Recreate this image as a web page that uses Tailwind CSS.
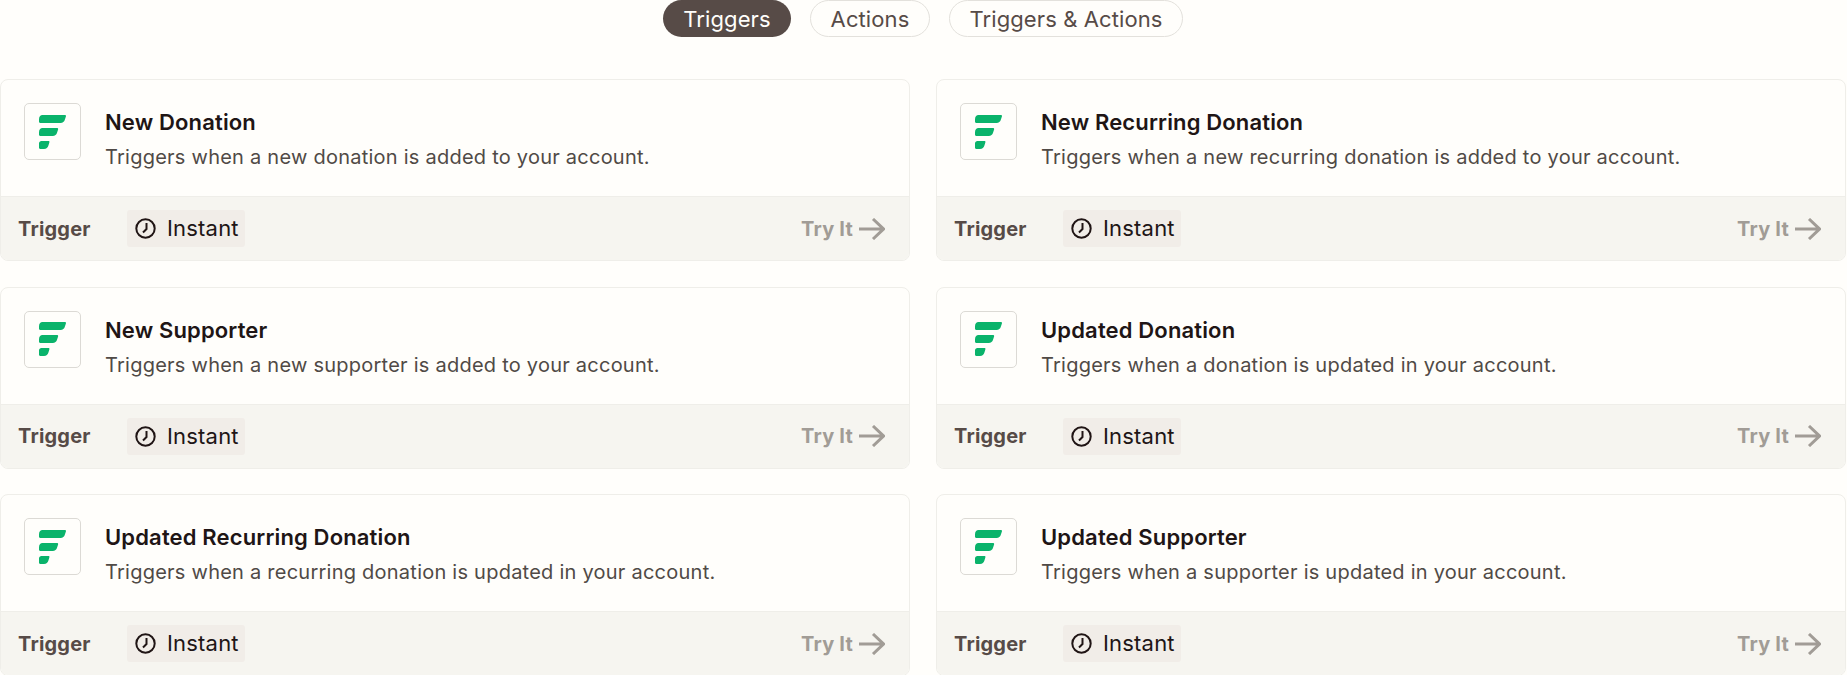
<!DOCTYPE html>
<html lang="en">
<head>
    <meta charset="UTF-8">
    <title>Triggers</title>
    <script src="https://cdn.jsdelivr.net/npm/@tailwindcss/browser@4"></script>
</head>
<body class="bg-[#fffefb] font-['Inter',sans-serif] overflow-hidden">
    <svg class="hidden">
        <symbol id="logo" viewBox="0 0 27 34">
            <path d="M3.500 0H25.800c.9 0 1.400.6 1.100 1.400L26 4.300C25.300 6.800 23.800 8 21.500 8H1.500C.5 8 0 7.400 0 6.500V4.500C0 1.700 1.300 0 3.500 0z" fill="#0ab36b"/>
            <path d="M3.500 13H18c.9 0 1.400.6 1.100 1.400L18.200 17.300C17.500 19.800 16 21 13.700 21H1.500C.5 21 0 20.400 0 19.500V17.500C0 14.700 1.300 13 3.500 13z" fill="#0ab36b"/>
            <path d="M2.500 26H9.500c.7 0 1.100.5.900 1.200L9.600 30C8.900 32.700 7.300 34 5 34H1.500C.5 34 0 33.400 0 32.500V28.500C0 27 1 26 2.500 26z" fill="#0ab36b"/>
        </symbol>
        <symbol id="clock" viewBox="0 0 21 21">
            <circle cx="10.500" cy="10.500" r="9.200" fill="none" stroke="currentColor" stroke-width="2"/>
            <path d="M11.500 5V11L8 14.500" fill="none" stroke="currentColor" stroke-width="2"/>
        </symbol>
        <symbol id="arrow" viewBox="0 0 26 22">
            <path d="M0 11H24.500M14 1 24.500 11 14 21" fill="none" stroke="currentColor" stroke-width="3"/>
        </symbol>
    </svg>

    <nav class="w-[1846px] flex justify-center gap-[19px] h-[79px] items-start text-[22px] leading-[36px] tracking-[0.1px] text-[#574b47]">
        <a class="h-[37px] w-[128px] flex items-center justify-center rounded-full bg-[#574b47] text-[#fffefb]">Triggers</a>
        <a class="h-[37px] w-[120px] flex items-center justify-center rounded-full border border-[#e3e1dc]">Actions</a>
        <a class="h-[37px] w-[234px] flex items-center justify-center rounded-full border border-[#e3e1dc]">Triggers &amp; Actions</a>
    </nav>

    <main class="grid grid-cols-[910px_910px] gap-x-[26px] gap-y-[25.5px]">
        <section class="h-[182px] flex flex-col rounded-[8px] border border-[#efeee9] overflow-hidden">
            <div class="h-[117px] flex items-start pt-[23px] pl-[23px] border-b border-[#efeee9]">
                <div class="size-[57px] shrink-0 flex items-center justify-center rounded-[5px] border border-[#dcdad5]"><svg class="w-[27px] h-[34px]"><use href="#logo"/></svg></div>
                <div class="ml-[24px]">
                    <h3 class="text-[22px] leading-[30px] mt-[4px] tracking-[0.15px] font-semibold text-[#201515]">New Donation</h3>
                    <p class="text-[20px] leading-[28px] mt-[6px] tracking-[0.24px] text-[#504a46]">Triggers when a new donation is added to your account.</p>
                </div>
            </div>
            <div class="flex-1 flex items-center bg-[#f6f5f0] pl-[17px] pr-[24px]">
                <span class="w-[109px] text-[20px] font-bold tracking-[0.2px] text-[#574b47]">Trigger</span>
                <span class="h-[37px] w-[118px] flex items-center pl-[8px] rounded-[3px] bg-[#f1ede8] text-[22px] tracking-[0.2px] text-[#201515]"><svg class="size-[21px] mr-[11px]"><use href="#clock"/></svg>Instant</span>
                <span class="ml-auto flex items-center text-[20px] font-bold tracking-[0.2px] text-[#a19c96]">Try It<svg class="w-[26px] h-[22px] ml-[6px]"><use href="#arrow"/></svg></span>
            </div>
        </section>
        <section class="h-[182px] flex flex-col rounded-[8px] border border-[#efeee9] overflow-hidden">
            <div class="h-[117px] flex items-start pt-[23px] pl-[23px] border-b border-[#efeee9]">
                <div class="size-[57px] shrink-0 flex items-center justify-center rounded-[5px] border border-[#dcdad5]"><svg class="w-[27px] h-[34px]"><use href="#logo"/></svg></div>
                <div class="ml-[24px]">
                    <h3 class="text-[22px] leading-[30px] mt-[4px] tracking-[0.15px] font-semibold text-[#201515]">New Recurring Donation</h3>
                    <p class="text-[20px] leading-[28px] mt-[6px] tracking-[0.24px] text-[#504a46]">Triggers when a new recurring donation is added to your account.</p>
                </div>
            </div>
            <div class="flex-1 flex items-center bg-[#f6f5f0] pl-[17px] pr-[24px]">
                <span class="w-[109px] text-[20px] font-bold tracking-[0.2px] text-[#574b47]">Trigger</span>
                <span class="h-[37px] w-[118px] flex items-center pl-[8px] rounded-[3px] bg-[#f1ede8] text-[22px] tracking-[0.2px] text-[#201515]"><svg class="size-[21px] mr-[11px]"><use href="#clock"/></svg>Instant</span>
                <span class="ml-auto flex items-center text-[20px] font-bold tracking-[0.2px] text-[#a19c96]">Try It<svg class="w-[26px] h-[22px] ml-[6px]"><use href="#arrow"/></svg></span>
            </div>
        </section>
        <section class="h-[182px] flex flex-col rounded-[8px] border border-[#efeee9] overflow-hidden">
            <div class="h-[117px] flex items-start pt-[23px] pl-[23px] border-b border-[#efeee9]">
                <div class="size-[57px] shrink-0 flex items-center justify-center rounded-[5px] border border-[#dcdad5]"><svg class="w-[27px] h-[34px]"><use href="#logo"/></svg></div>
                <div class="ml-[24px]">
                    <h3 class="text-[22px] leading-[30px] mt-[4px] tracking-[0.15px] font-semibold text-[#201515]">New Supporter</h3>
                    <p class="text-[20px] leading-[28px] mt-[6px] tracking-[0.24px] text-[#504a46]">Triggers when a new supporter is added to your account.</p>
                </div>
            </div>
            <div class="flex-1 flex items-center bg-[#f6f5f0] pl-[17px] pr-[24px]">
                <span class="w-[109px] text-[20px] font-bold tracking-[0.2px] text-[#574b47]">Trigger</span>
                <span class="h-[37px] w-[118px] flex items-center pl-[8px] rounded-[3px] bg-[#f1ede8] text-[22px] tracking-[0.2px] text-[#201515]"><svg class="size-[21px] mr-[11px]"><use href="#clock"/></svg>Instant</span>
                <span class="ml-auto flex items-center text-[20px] font-bold tracking-[0.2px] text-[#a19c96]">Try It<svg class="w-[26px] h-[22px] ml-[6px]"><use href="#arrow"/></svg></span>
            </div>
        </section>
        <section class="h-[182px] flex flex-col rounded-[8px] border border-[#efeee9] overflow-hidden">
            <div class="h-[117px] flex items-start pt-[23px] pl-[23px] border-b border-[#efeee9]">
                <div class="size-[57px] shrink-0 flex items-center justify-center rounded-[5px] border border-[#dcdad5]"><svg class="w-[27px] h-[34px]"><use href="#logo"/></svg></div>
                <div class="ml-[24px]">
                    <h3 class="text-[22px] leading-[30px] mt-[4px] tracking-[0.15px] font-semibold text-[#201515]">Updated Donation</h3>
                    <p class="text-[20px] leading-[28px] mt-[6px] tracking-[0.24px] text-[#504a46]">Triggers when a donation is updated in your account.</p>
                </div>
            </div>
            <div class="flex-1 flex items-center bg-[#f6f5f0] pl-[17px] pr-[24px]">
                <span class="w-[109px] text-[20px] font-bold tracking-[0.2px] text-[#574b47]">Trigger</span>
                <span class="h-[37px] w-[118px] flex items-center pl-[8px] rounded-[3px] bg-[#f1ede8] text-[22px] tracking-[0.2px] text-[#201515]"><svg class="size-[21px] mr-[11px]"><use href="#clock"/></svg>Instant</span>
                <span class="ml-auto flex items-center text-[20px] font-bold tracking-[0.2px] text-[#a19c96]">Try It<svg class="w-[26px] h-[22px] ml-[6px]"><use href="#arrow"/></svg></span>
            </div>
        </section>
        <section class="h-[182px] flex flex-col rounded-[8px] border border-[#efeee9] overflow-hidden">
            <div class="h-[117px] flex items-start pt-[23px] pl-[23px] border-b border-[#efeee9]">
                <div class="size-[57px] shrink-0 flex items-center justify-center rounded-[5px] border border-[#dcdad5]"><svg class="w-[27px] h-[34px]"><use href="#logo"/></svg></div>
                <div class="ml-[24px]">
                    <h3 class="text-[22px] leading-[30px] mt-[4px] tracking-[0.15px] font-semibold text-[#201515]">Updated Recurring Donation</h3>
                    <p class="text-[20px] leading-[28px] mt-[6px] tracking-[0.24px] text-[#504a46]">Triggers when a recurring donation is updated in your account.</p>
                </div>
            </div>
            <div class="flex-1 flex items-center bg-[#f6f5f0] pl-[17px] pr-[24px]">
                <span class="w-[109px] text-[20px] font-bold tracking-[0.2px] text-[#574b47]">Trigger</span>
                <span class="h-[37px] w-[118px] flex items-center pl-[8px] rounded-[3px] bg-[#f1ede8] text-[22px] tracking-[0.2px] text-[#201515]"><svg class="size-[21px] mr-[11px]"><use href="#clock"/></svg>Instant</span>
                <span class="ml-auto flex items-center text-[20px] font-bold tracking-[0.2px] text-[#a19c96]">Try It<svg class="w-[26px] h-[22px] ml-[6px]"><use href="#arrow"/></svg></span>
            </div>
        </section>
        <section class="h-[182px] flex flex-col rounded-[8px] border border-[#efeee9] overflow-hidden">
            <div class="h-[117px] flex items-start pt-[23px] pl-[23px] border-b border-[#efeee9]">
                <div class="size-[57px] shrink-0 flex items-center justify-center rounded-[5px] border border-[#dcdad5]"><svg class="w-[27px] h-[34px]"><use href="#logo"/></svg></div>
                <div class="ml-[24px]">
                    <h3 class="text-[22px] leading-[30px] mt-[4px] tracking-[0.15px] font-semibold text-[#201515]">Updated Supporter</h3>
                    <p class="text-[20px] leading-[28px] mt-[6px] tracking-[0.24px] text-[#504a46]">Triggers when a supporter is updated in your account.</p>
                </div>
            </div>
            <div class="flex-1 flex items-center bg-[#f6f5f0] pl-[17px] pr-[24px]">
                <span class="w-[109px] text-[20px] font-bold tracking-[0.2px] text-[#574b47]">Trigger</span>
                <span class="h-[37px] w-[118px] flex items-center pl-[8px] rounded-[3px] bg-[#f1ede8] text-[22px] tracking-[0.2px] text-[#201515]"><svg class="size-[21px] mr-[11px]"><use href="#clock"/></svg>Instant</span>
                <span class="ml-auto flex items-center text-[20px] font-bold tracking-[0.2px] text-[#a19c96]">Try It<svg class="w-[26px] h-[22px] ml-[6px]"><use href="#arrow"/></svg></span>
            </div>
        </section>
    </main>
</body>
</html>
